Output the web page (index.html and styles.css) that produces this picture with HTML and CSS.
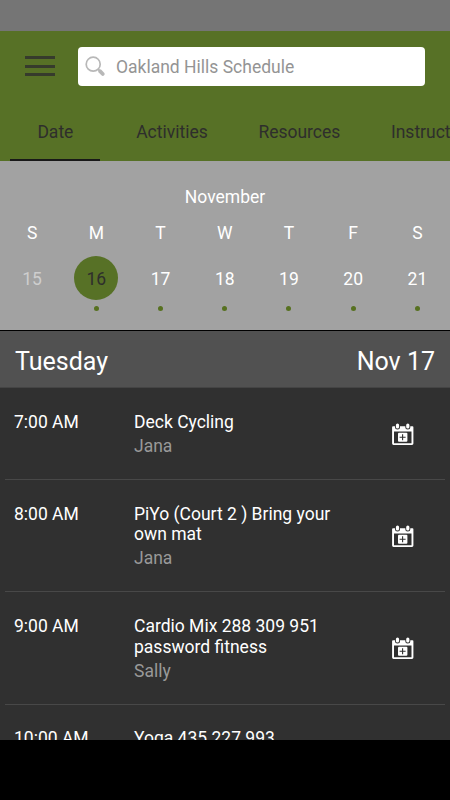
FILE: index.html
```html
<!DOCTYPE html>
<html>
    <head>
        <meta charset="utf-8">
        <title>Oakland Hills Schedule</title>
        <link rel="stylesheet" href="styles.css">
    </head>
    <body>
        <!-- calendar icon, shared by all the rows -->
        <svg class="sprite">
            <symbol id="addcal" viewBox="0 0 22 23">
                <path fill="#fff" fill-rule="evenodd" d="M1 3.2H20.5Q21.4 3.2 21.4 4.2V20.6Q21.4 22 20 22H1.5Q.1 22 .1 20.6V4.2Q.1 3.2 1 3.2ZM2 8.4V20.2H19.5V8.4Z"/>
                <rect x="3" y="0" width="5" height="6.6" rx="2.5" fill="#303030"/>
                <rect x="13.3" y="0" width="5" height="6.6" rx="2.5" fill="#303030"/>
                <rect x="3.9" y=".4" width="3.2" height="5.2" rx="1.6" fill="#fff"/>
                <rect x="14.2" y=".4" width="3.2" height="5.2" rx="1.6" fill="#fff"/>
                <rect x="6" y="9.8" width="9.4" height="9" rx="1" fill="#fff"/>
                <path stroke="#303030" stroke-width="1.1" d="M7.6 14.3H13.6M10.6 11.3V17.3"/>
            </symbol>
        </svg>

        <div class="status"></div>

        <div class="header">
            <div class="top">
                <div class="menu"><span></span><span></span><span></span></div>
                <div class="search">
                    <svg width="22" height="22" viewBox="0 0 22 22" fill="none" stroke="#b8b8b8">
                        <circle cx="9.2" cy="8.2" r="7" stroke-width="1.7"/>
                        <path stroke-width="1.7" d="M14 13L16.3 15.3"/>
                        <path stroke-width="3.8" stroke-linecap="round" d="M16 15.2L18.8 18"/>
                    </svg>
                    <span>Oakland Hills Schedule</span>
                </div>
            </div>
            <div class="tabs">
                <div class="tab active">Date</div>
                <div class="tab">Activities</div>
                <div class="tab">Resources</div>
                <div class="tab">Instructors</div>
            </div>
        </div>

        <div class="calendar">
            <div class="month">November</div>
            <div class="week">
                <div class="day past"><b>S</b><span class="num">15</span></div>
                <div class="day selected"><b>M</b><span class="num">16</span><i></i></div>
                <div class="day"><b>T</b><span class="num">17</span><i></i></div>
                <div class="day"><b>W</b><span class="num">18</span><i></i></div>
                <div class="day"><b>T</b><span class="num">19</span><i></i></div>
                <div class="day"><b>F</b><span class="num">20</span><i></i></div>
                <div class="day"><b>S</b><span class="num">21</span><i></i></div>
            </div>
        </div>

        <div class="dayhead">
            <span>Tuesday</span>
            <span>Nov 17</span>
        </div>

        <div class="list">
            <div class="row">
                <div class="time">7:00 AM</div>
                <div class="info">
                    <div>Deck Cycling</div>
                    <div class="who">Jana</div>
                </div>
                <svg class="add"><use href="#addcal"/></svg>
            </div>
            <div class="row">
                <div class="time">8:00 AM</div>
                <div class="info">
                    <div>PiYo (Court 2 ) Bring your own mat</div>
                    <div class="who">Jana</div>
                </div>
                <svg class="add"><use href="#addcal"/></svg>
            </div>
            <div class="row">
                <div class="time">9:00 AM</div>
                <div class="info">
                    <div>Cardio Mix 288 309 951 password fitness</div>
                    <div class="who">Sally</div>
                </div>
                <svg class="add"><use href="#addcal"/></svg>
            </div>
            <div class="row">
                <div class="time">10:00 AM</div>
                <div class="info">
                    <div>Yoga 435 227 993</div>
                </div>
            </div>
        </div>

        <div class="footer"></div>
    </body>
</html>
```
FILE: styles.css
```css
* {
    box-sizing: border-box;
}
body {
    margin: 0;
    width: 450px;
    height: 800px;
    overflow: hidden;
    display: flex;
    flex-direction: column;
    background: #000000;
    color: #ffffff;
    font-family: Roboto, sans-serif;
    font-size: 17.5px;
}
.sprite {
    display: none;
}
.status {
    height: 31px;
    background: #757575;
}

/*Header*/
.header {
    height: 130px;
    background: #577126;
    color: #2e2e2c;
    display: flex;
    flex-direction: column;
    justify-content: space-between;
}
.top {
    display: flex;
    padding: 16px 25px 0;
}
.menu {
    width: 30px;
    margin-right: 23px;
    padding-top: 9px;
}
.menu span {
    display: block;
    height: 3px;
    margin-bottom: 5.5px;
    background: #363b2c;
}
.search {
    flex: 1;
    height: 39px;
    display: flex;
    align-items: center;
    padding-left: 6px;
    background: #ffffff;
    border-radius: 4px;
    color: #949494;
}
.search span {
    margin-left: 10px;
    padding-top: 1px;
}
.tabs {
    display: flex;
    padding-left: 10.4px;
    overflow: hidden;
}
.tab {
    flex: none;
    height: 58px;
    padding: 0 25.3px;
    line-height: 58px;
}
.tab.active {
    width: 90px;
    padding: 0;
    text-align: center;
    margin-right: 10.5px;
    box-shadow: inset 0 -2px #191919;
}

/*Calendar*/
.calendar {
    height: 170px;
    padding-top: 26px;
    background: #a2a2a2;
    border-bottom: 1px solid #000000;
    text-align: center;
}
.month {
    line-height: 21px;
}
.week {
    display: grid;
    grid-template-columns: repeat(7, 1fr);
    padding: 15px 0.5px 0 0;
}
.day {
    display: flex;
    flex-direction: column;
    align-items: center;
}
.day b {
    font-weight: normal;
    line-height: 21px;
}
.day i {
    width: 5px;
    height: 5px;
    margin-top: 6px;
    border-radius: 50%;
    background: #577120;
}
.num {
    width: 44px;
    height: 44px;
    margin-top: 12px;
    line-height: 47px;
    border-radius: 50%;
}
.past .num {
    color: #cecece;
}
.selected .num {
    background: #577126;
    color: #2e2e2c;
}

/*Schedule*/
.dayhead {
    height: 57px;
    display: flex;
    justify-content: space-between;
    align-items: center;
    padding: 4px 15px 0;
    background: #515151;
    border-bottom: 1px solid #444444;
    font-size: 25px;
}
.list {
    height: 352px;
    overflow: hidden;
    background: #303030;
}
.row {
    display: flex;
    margin: 0 5px;
    padding: 23.8px 31px 22.6px 9px;
    border-bottom: 1px solid #484848;
    line-height: 20.5px;
}
.time {
    width: 120px;
}
.info {
    width: 205px;
}
.who {
    margin-top: 3.5px;
    color: #999999;
}
.add {
    width: 22px;
    height: 23px;
    margin-left: auto;
    align-self: center;
}
.footer {
    height: 60px;
    background: #000000;
}
```
